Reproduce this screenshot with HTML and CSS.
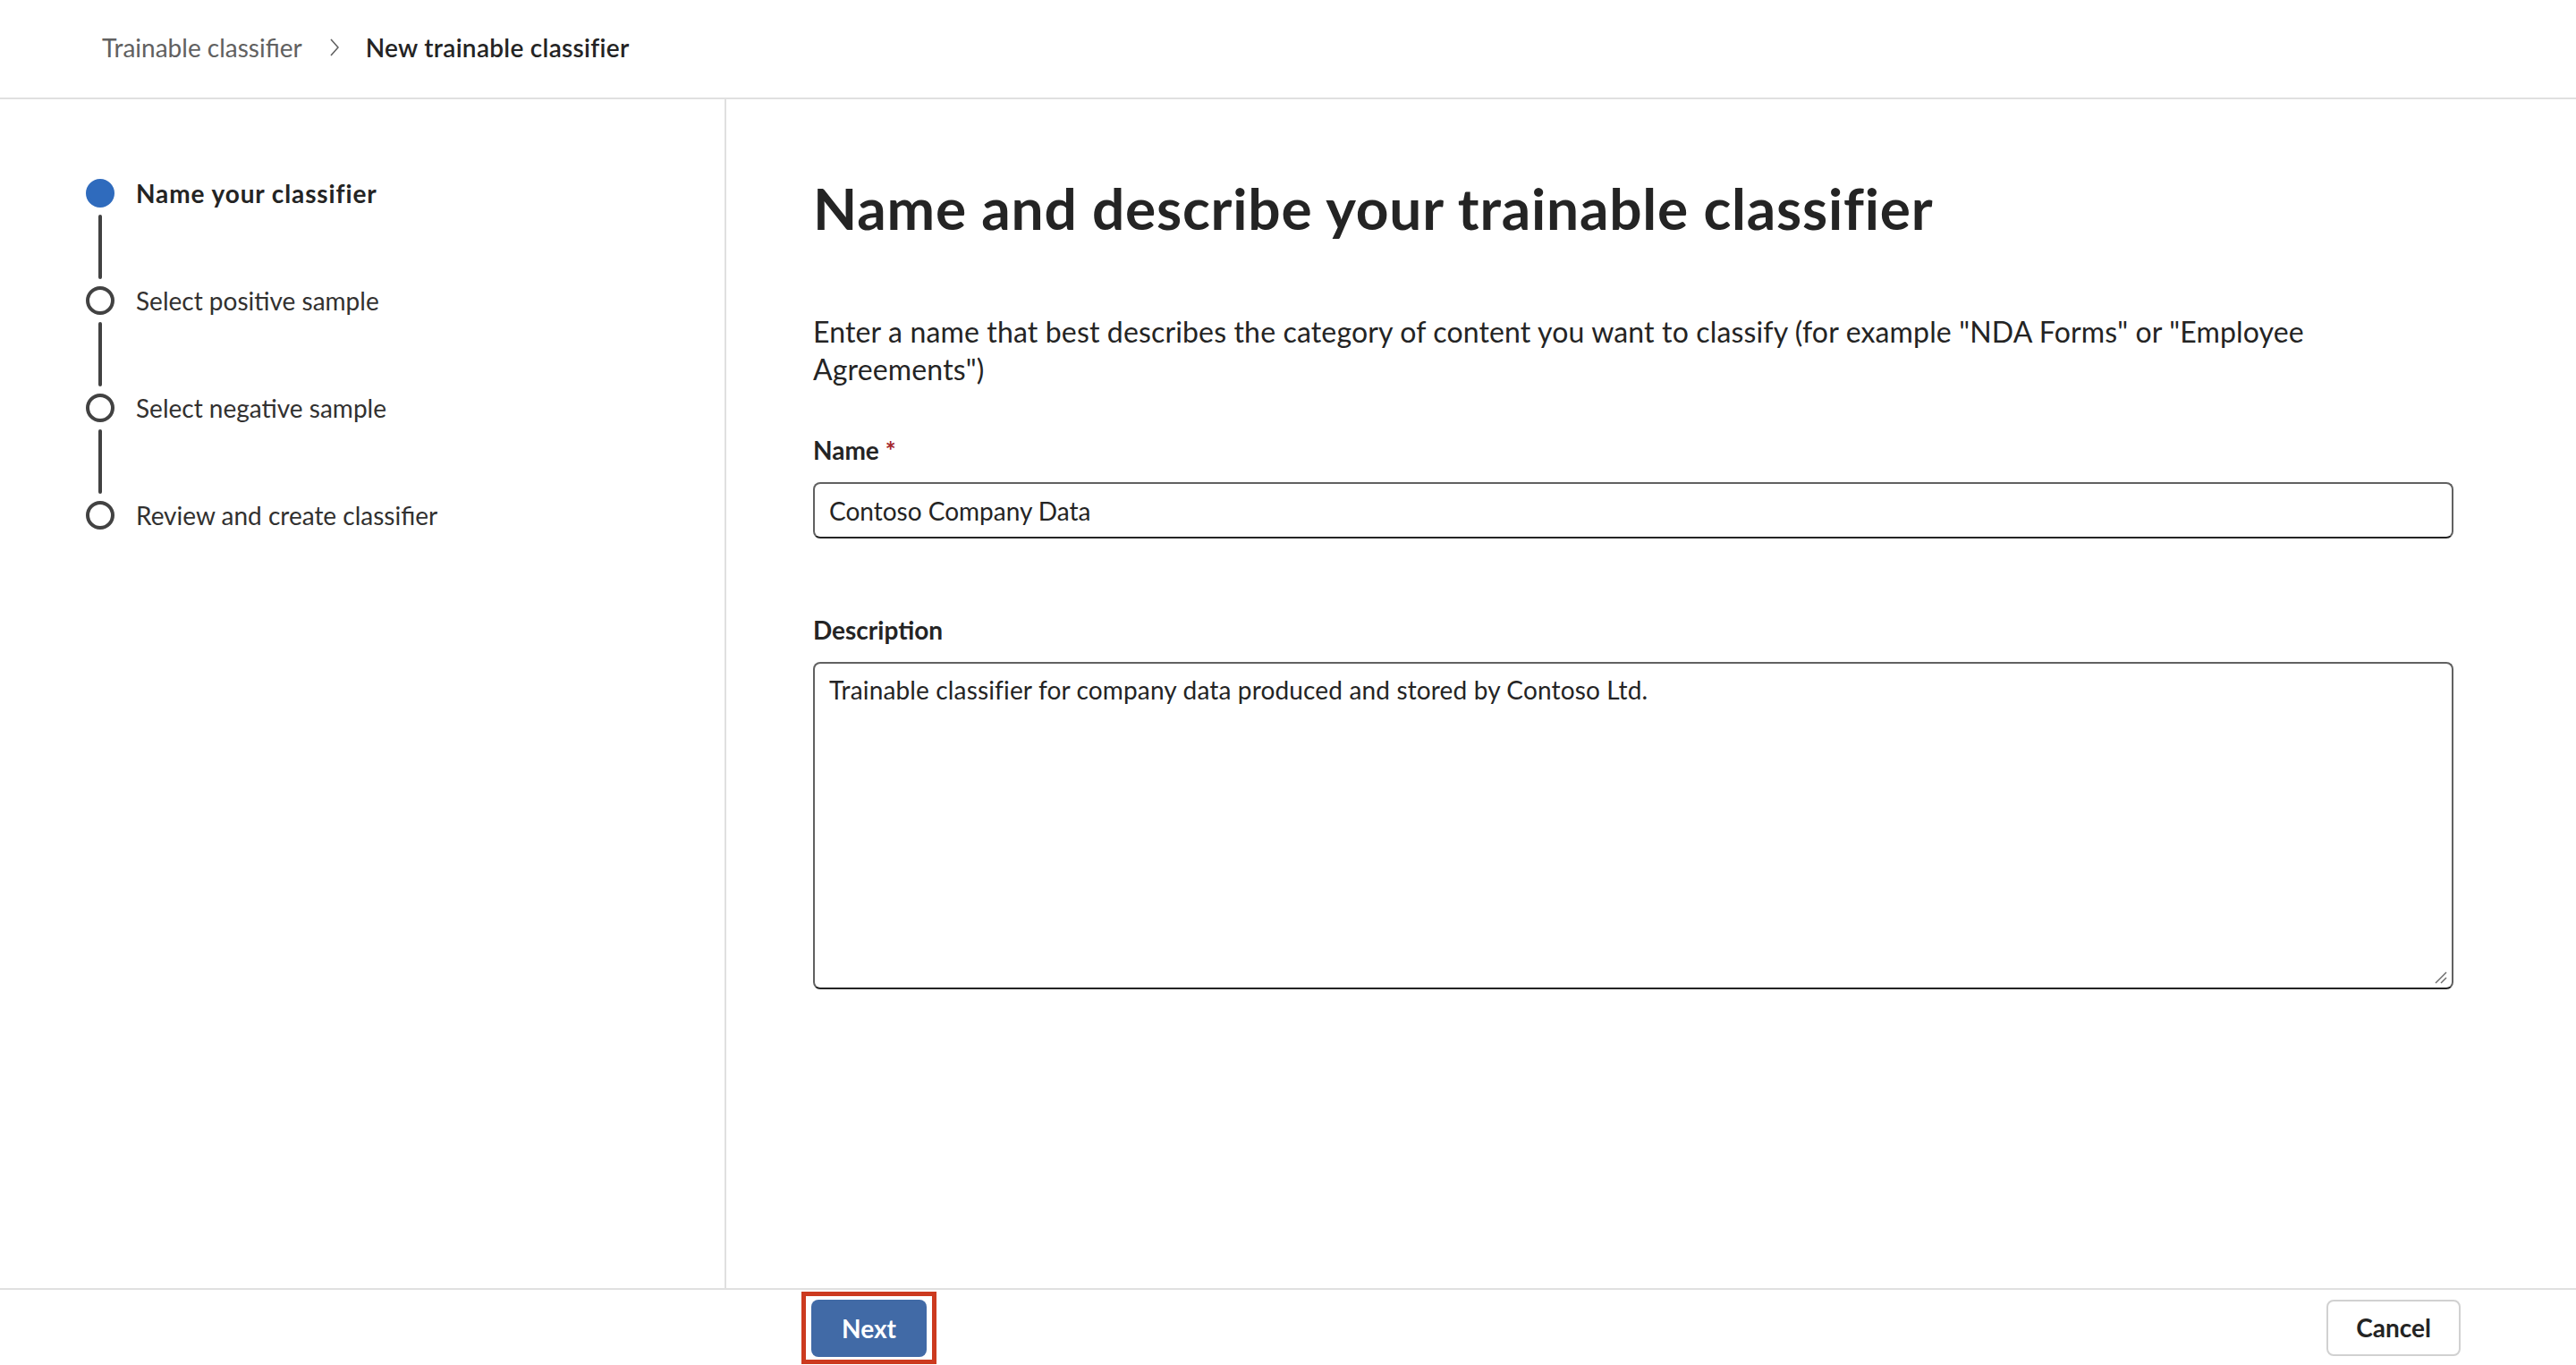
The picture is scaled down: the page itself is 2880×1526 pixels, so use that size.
FILE: index.html
```html
<!DOCTYPE html>
<html lang="en">
<head>
<meta charset="utf-8">
<title>New trainable classifier</title>
<link rel="stylesheet" href="styles.css">
</head>
<body>
<div class="page">
  <header class="topbar">
    <nav class="breadcrumb">
      <span class="crumb">Trainable classifier</span>
      <svg class="chev" width="10" height="20" viewBox="0 0 10 20"><polyline points="1,1 9,10 1,19" fill="none" stroke="#616161" stroke-width="1.6"/></svg>
      <span class="crumb current">New trainable classifier</span>
    </nav>
  </header>
  <div class="main">
    <aside class="steps">
      <div class="step active"><span class="dot"></span><span class="step-label">Name your classifier</span></div>
      <div class="connector"></div>
      <div class="step"><span class="dot"></span><span class="step-label">Select positive sample</span></div>
      <div class="connector"></div>
      <div class="step"><span class="dot"></span><span class="step-label">Select negative sample</span></div>
      <div class="connector"></div>
      <div class="step"><span class="dot"></span><span class="step-label">Review and create classifier</span></div>
    </aside>
    <section class="content">
      <h1 class="title">Name and describe your trainable classifier</h1>
      <p class="intro">Enter a name that best describes the category of content you want to classify (for example "NDA Forms" or "Employee Agreements")</p>
      <label class="field-label" for="name">Name <span class="req">*</span></label>
      <input id="name" class="text-input" type="text" value="Contoso Company Data">
      <label class="field-label desc-label" for="desc">Description</label>
      <div class="area-wrap">
        <textarea id="desc" class="text-area">Trainable classifier for company data produced and stored by Contoso Ltd.</textarea>
        <svg class="grip" width="16" height="16" viewBox="0 0 16 16"><line x1="2" y1="14" x2="14" y2="2" stroke="#6b6b6b" stroke-width="1.4"/><line x1="8" y1="14" x2="14" y2="8" stroke="#6b6b6b" stroke-width="1.4"/></svg>
      </div>
    </section>
  </div>
  <footer class="footer">
    <span class="highlight"><button class="btn primary">Next</button></span>
    <button class="btn secondary">Cancel</button>
  </footer>
</div>
</body>
</html>
```

FILE: styles.css
```css
* { box-sizing: border-box; }
html, body { margin: 0; padding: 0; background: #ffffff; }
body {
  font-family: "Segoe UI", Lato, "Noto Sans", sans-serif;
  color: #242424;
}
.page {
  width: 2880px;
  height: 1526px;
  display: flex;
  flex-direction: column;
}
.topbar {
  height: 111px;
  flex: 0 0 111px;
  border-bottom: 2px solid #e0e0e0;
  display: flex;
  align-items: center;
  padding-left: 114px;
  padding-bottom: 4px;
}
.breadcrumb {
  display: flex;
  align-items: center;
  font-size: 28px;
  line-height: 40px;
}
.crumb { color: #616161; }
.crumb.current { color: #242424; font-weight: 600; letter-spacing: 0.3px; }
.chev { margin: 0 30px 0 31px; }

.main {
  flex: 1 1 auto;
  display: flex;
  min-height: 0;
}
.steps {
  width: 812px;
  flex: 0 0 812px;
  border-right: 2px solid #e0e0e0;
  padding: 89px 0 0 96px;
  display: flex;
  flex-direction: column;
}
.step {
  display: flex;
  align-items: center;
  height: 32px;
}
.dot {
  width: 32px;
  height: 32px;
  border-radius: 50%;
  border: 4px solid #424242;
  flex: 0 0 32px;
}
.step.active .dot { background: #2f6bbd; border-color: #2f6bbd; }
.step-label {
  margin-left: 24px;
  font-size: 28px;
  line-height: 40px;
  color: #323130;
}
.step.active .step-label { font-weight: 700; color: #242424; letter-spacing: 0.9px; }
.connector {
  width: 4px;
  height: 72px;
  margin: 8px 0 8px 14px;
  background: #424242;
  border-radius: 2px;
}

.content {
  flex: 1 1 auto;
  padding: 80px 137px 0 97px;
  display: flex;
  flex-direction: column;
  align-items: stretch;
}
.title {
  margin: 0;
  font-size: 64px;
  line-height: 84px;
  font-weight: 700;
  letter-spacing: 0.8px;
  color: #242424;
}
.intro {
  margin: 75px 0 0 0;
  font-size: 32px;
  line-height: 42px;
  letter-spacing: 0.15px;
  color: #242424;
}
.field-label {
  display: block;
  margin-top: 49px;
  font-size: 28px;
  line-height: 40px;
  font-weight: 700;
  color: #242424;
}
.req { color: #a4262c; }
.desc-label { margin-top: 82px; }
.text-input, .text-area {
  display: block;
  width: 100%;
  font-family: inherit;
  font-size: 28px;
  color: #242424;
  border: 2px solid #616161;
  border-bottom-color: #242424;
  border-radius: 8px;
  background: #fff;
  outline: none;
}
.text-input {
  margin-top: 16px;
  height: 63px;
  padding: 0 16px;
}
.area-wrap {
  position: relative;
  margin-top: 16px;
}
.text-area {
  height: 366px;
  padding: 9px 16px;
  line-height: 40px;
  letter-spacing: 0.15px;
  resize: none;
}
.grip {
  position: absolute;
  right: 6px;
  bottom: 5px;
}

.footer {
  flex: 0 0 86px;
  border-top: 2px solid #e0e0e0;
  display: flex;
  align-items: center;
  justify-content: space-between;
  padding: 0 129px 0 896px;
}
.highlight {
  display: inline-flex;
  border: 5px solid #cc3a1f;
  padding: 4px 6px 3px 6px;
}
.btn {
  font-family: inherit;
  font-size: 28px;
  font-weight: 700;
  border-radius: 8px;
  height: 64px;
  cursor: pointer;
}
.btn.primary {
  width: 129px;
  background: #416aa6;
  color: #ffffff;
  border: none;
}
.btn.secondary {
  width: 150px;
  height: 63px;
  background: #ffffff;
  color: #242424;
  border: 2px solid #d1d1d1;
}
```
